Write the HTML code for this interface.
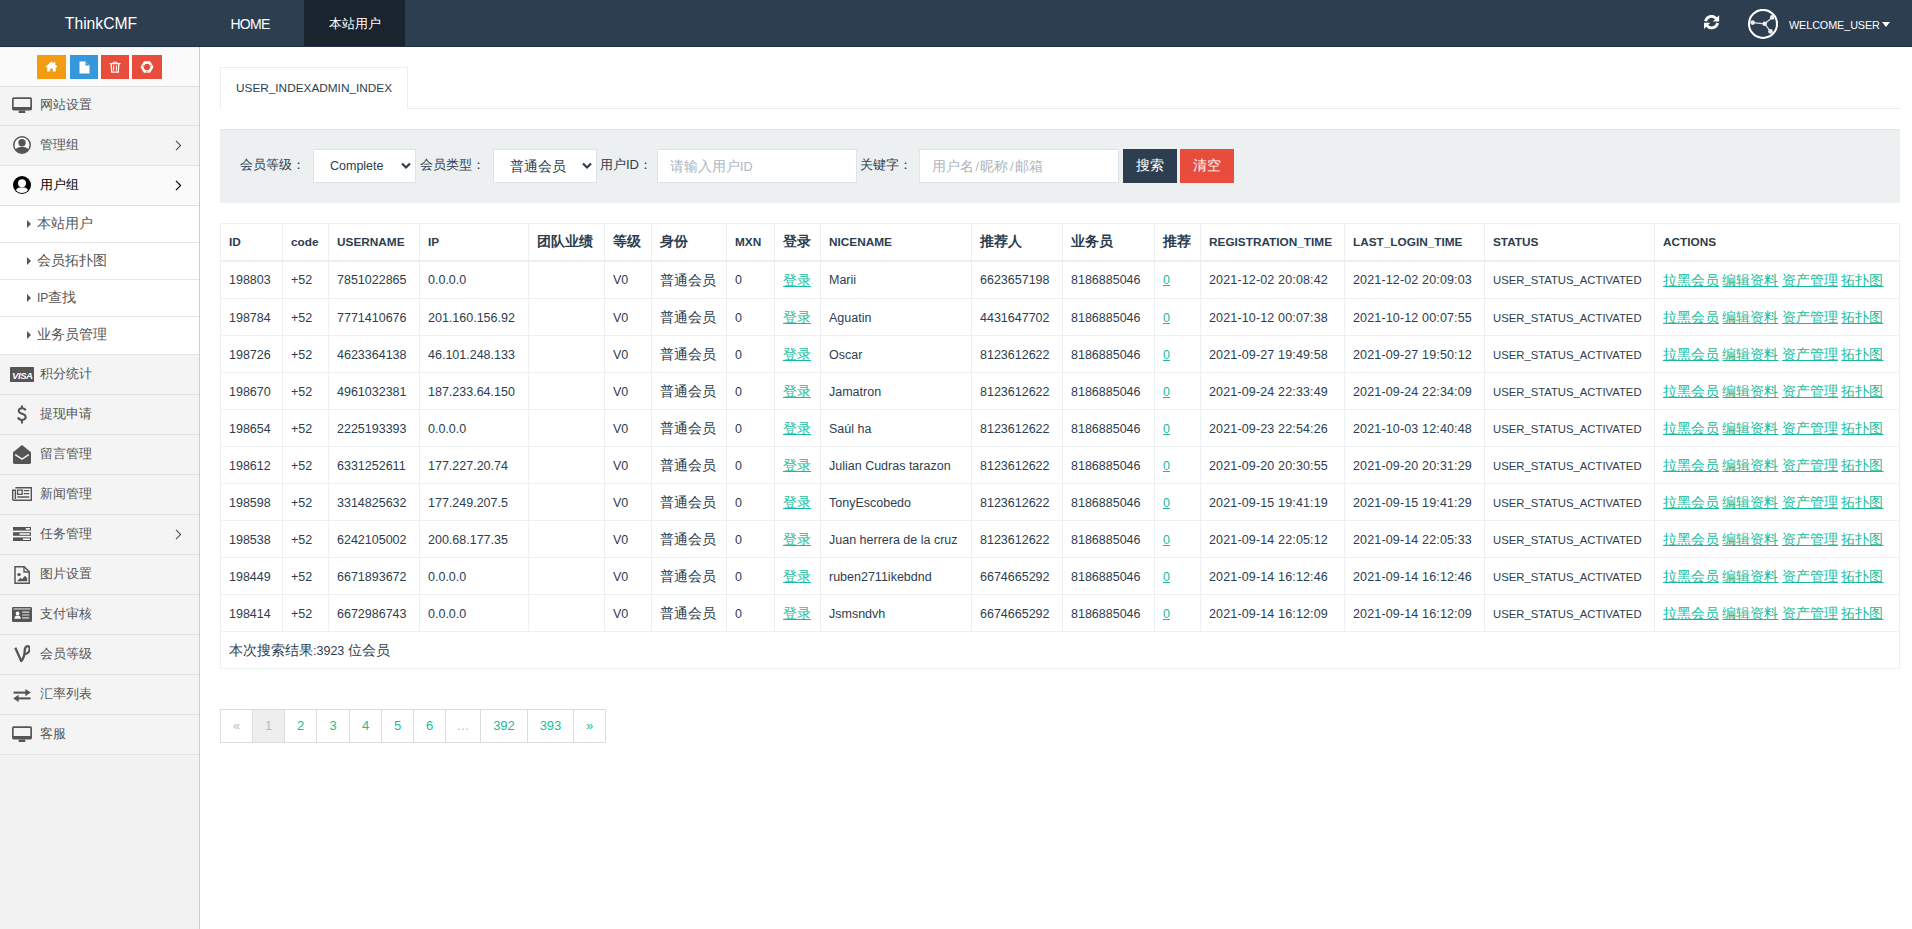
<!DOCTYPE html>
<html><head><meta charset="utf-8">
<style>
*{box-sizing:border-box;margin:0;padding:0}
html,body{width:1912px;height:929px;overflow:hidden;background:#fff;font-family:"Liberation Sans",sans-serif;font-size:12.5px;color:#2c3e50}
.c{font-size:14px}
a{color:#18bc9c;text-decoration:underline}
#nav{position:absolute;left:0;top:0;width:1912px;height:47px;background:#2c3e50;border-bottom:1px solid #203047}
#nav .brand{position:absolute;left:0;top:0;width:200px;height:46px;line-height:46px;text-align:center;color:#fff;font-size:15.7px}
#nav .item{position:absolute;top:0;height:46px;line-height:46px;color:#fff;font-size:13px;text-align:center}
#nav .item .c{font-size:13px}
#side{position:absolute;left:0;top:47px;width:200px;height:882px;background:#f2f2f2;border-right:1px solid #cdcdcd}
#side .top{position:absolute;left:0;top:1px;width:199px;height:39px;background:#fafafa;border-bottom:1px solid #dedede}
.sb{position:absolute;top:7px;height:24px}
.mi{position:absolute;left:0;width:199px;border-bottom:1px solid #e2e2e2;color:#555}
.mi .t{position:absolute;left:40px;top:0;font-size:13px;line-height:36px}
.mi svg{position:absolute}
.mi .chev{position:absolute;left:175px}
.sub{background:#fff;border-bottom:1px solid #e6e6e6}
.sub .t{left:37px;line-height:34px;font-size:14px}
.sub .tri{position:absolute;left:27px;top:14px;width:0;height:0;border-top:4px solid transparent;border-bottom:4px solid transparent;border-left:4px solid #555}
#main{position:absolute;left:200px;top:47px;width:1712px;height:882px;background:#fff}
#tab{position:absolute;left:220px;top:67px;width:188px;height:42px;border:1px solid #e9eef0;border-bottom:none;background:#fff}
#tab span{position:absolute;left:15px;top:13px;font-size:11.8px;line-height:14px;color:#2c3e50}
#tabline{position:absolute;left:407px;top:108px;width:1493px;height:1px;background:#e9eef0}
#well{position:absolute;left:220px;top:129px;width:1680px;height:74px;background:#ecf0f1;border-top:1px solid #e3e6e8}
.lbl{position:absolute;top:21px;font-size:13px;line-height:28px;color:#2c3e50}
.lbl .c{font-size:13px}
.sel,.inp{position:absolute;top:19px;height:34px;background:#fff;border:1px solid #dce4ec}
.sel>span{position:absolute;left:16px;top:0;line-height:32px}
.sel svg{position:absolute;top:12px}
.inp>span{position:absolute;left:12px;top:0;line-height:32px;color:#acb6c0}
.btn{position:absolute;top:19px;height:34px;color:#fff;text-align:center;line-height:33px}
#tb{position:absolute;left:220px;top:223px;border-collapse:collapse;table-layout:fixed;width:1680px}
#tb td,#tb th{border:1px solid #ecf0f1;padding:0 8px;height:37px;text-align:left;white-space:nowrap;overflow:hidden;vertical-align:middle;line-height:20px}
#tb th{font-weight:bold;height:37px;border-bottom:2px solid #ecf0f1}
#tb .u{font-size:11.8px}
#tb .u2{font-size:11.3px}
#tb tr.ft td{height:37px}
#tb tr.r1 td{height:38px}
#tb td{padding-top:1px}
.dt{letter-spacing:0.15px}
#pg{position:absolute;left:220px;top:709px;height:34px}
#pg div{position:absolute;top:0;height:34px;border:1px solid #ddd;line-height:32px;text-align:center;color:#18bc9c;font-size:13px}
</style></head><body>
<div id="nav">
  <div class="brand" style="left:1px;top:1px">ThinkCMF</div>
  <div class="item" style="left:209px;width:82px;font-size:14px;letter-spacing:-0.7px;top:0.5px">HOME</div>
  <div class="item" style="left:304px;width:101px;background:#1a242f"><span class="c" style="position:relative;top:1px">本站用户</span></div>
  <svg style="position:absolute;left:1704px;top:15px" width="16" height="15" viewBox="0 0 16 15">
    <path d="M1.6 6.3A6 6 0 0 1 12.2 3.6" fill="none" stroke="#fff" stroke-width="2.8"/>
    <path d="M8.8 6.4H15.1V0.2z" fill="#fff"/>
    <path d="M13.6 7.9A6 6 0 0 1 3 10.6" fill="none" stroke="#fff" stroke-width="2.8"/>
    <path d="M0 7.8H6.3L0 14z" fill="#fff"/>
  </svg>
  <svg style="position:absolute;left:1747px;top:9px" width="32" height="31" viewBox="0 0 32 31">
    <circle cx="16" cy="14.9" r="14" fill="none" stroke="#fff" stroke-width="2"/>
    <path d="M5.6 13.6L17.7 14.8L25.2 8.4M17.7 14.8L23.5 22.4" stroke="#dfe2e5" stroke-width="1.3" fill="none"/>
    <circle cx="5.6" cy="13.6" r="2.3" fill="#eceef0"/><circle cx="17.7" cy="14.8" r="2.3" fill="#eceef0"/>
    <circle cx="25.2" cy="8.4" r="2.3" fill="#eceef0"/><circle cx="23.5" cy="22.4" r="2.3" fill="#eceef0"/>
  </svg>
  <div style="position:absolute;left:1789px;top:18px;font-size:10.8px;line-height:14px;color:#fff;letter-spacing:-0.08px">WELCOME_USER</div>
  <div style="position:absolute;left:1882px;top:22px;width:0;height:0;border-left:4.5px solid transparent;border-right:4.5px solid transparent;border-top:5px solid #fff"></div>
</div>

<div id="side">
  <div class="top">
    <div class="sb" style="left:37px;width:29px;background:#f39c12">
      <svg style="position:absolute;left:8px;top:6px" width="13" height="11" viewBox="0 0 13 11"><path d="M6.5 0.5L0.5 5.8L1.3 6.6L2.2 5.8V10.5H5.2V7.5H7.8V10.5H10.8V5.8L11.7 6.6L12.5 5.8L10.3 3.8V1H8.9V2.6z" fill="#fff"/></svg>
    </div>
    <div class="sb" style="left:70px;width:28px;background:#3498db">
      <svg style="position:absolute;left:9px;top:6px" width="11" height="13" viewBox="0 0 11 13"><path d="M0.5 0.5H6.5L10.5 4.5V12.5H0.5z" fill="#fff"/><path d="M6.5 0.5V4.5H10.5" fill="#3498db"/></svg>
    </div>
    <div class="sb" style="left:101px;width:28px;background:#e74c3c">
      <svg style="position:absolute;left:8px;top:6px" width="12" height="12" viewBox="0 0 12 12"><path d="M0.6 2.6H11.4" stroke="#fff" stroke-width="1.3"/><path d="M4.2 2.4V1.2H7.8V2.4" stroke="#fff" stroke-width="1" fill="none"/><path d="M2.2 2.8L2.7 11.2H9.3L9.8 2.8" stroke="#fff" stroke-width="1.3" fill="none"/><path d="M4.6 4.4V9.6M7.4 4.4V9.6" stroke="#fff" stroke-width="1"/></svg>
    </div>
    <div class="sb" style="left:132px;width:30px;background:#e74c3c">
      <svg style="position:absolute;left:8px;top:5px" width="14" height="14" viewBox="0 0 14 14"><path d="M2 7L4.5 2.6H9.5L12 7L9.5 11.4H4.5z" fill="none" stroke="#fff" stroke-width="2.6" stroke-linejoin="round"/><path d="M7 3.6L10 9H4z" fill="#e74c3c"/><path d="M2.5 5.2L4.5 6.4M11.5 5.2L9.5 6.4M7 12.5V10.6" stroke="#e74c3c" stroke-width="0.9"/></svg>
    </div>
  </div>
  
</div>

<div id="tab"><span>USER_INDEXADMIN_INDEX</span></div>
<div id="tabline"></div>

<div id="well">
  <div class="lbl" style="left:20px"><span class="c">会员等级：</span></div>
  <div class="sel" style="left:93px;width:103px"><span>Complete</span><svg style="left:87px" width="10" height="8" viewBox="0 0 10 8"><path d="M1 1.5L5 5.5L9 1.5" stroke="#2c3e50" stroke-width="2.2" fill="none"/></svg></div>
  <div class="lbl" style="left:200px"><span class="c">会员类型：</span></div>
  <div class="sel" style="left:273px;width:104px"><span class="c" style="left:16px">普通会员</span><svg style="left:88px" width="10" height="8" viewBox="0 0 10 8"><path d="M1 1.5L5 5.5L9 1.5" stroke="#2c3e50" stroke-width="2.2" fill="none"/></svg></div>
  <div class="lbl" style="left:380px"><span class="c">用户</span>ID<span class="c">：</span></div>
  <div class="inp" style="left:437px;width:200px"><span><span class="c">请输入用户</span>ID</span></div>
  <div class="lbl" style="left:640px"><span class="c">关键字：</span></div>
  <div class="inp" style="left:699px;width:200px"><span><span class="c">用户名</span><span style="margin:0 1.5px">/</span><span class="c">昵称</span><span style="margin:0 1.5px">/</span><span class="c">邮箱</span></span></div>
  <div class="btn" style="left:903px;width:54px;background:#2c3e50"><span class="c">搜索</span></div>
  <div class="btn" style="left:960px;width:54px;background:#e74c3c"><span class="c">清空</span></div>
</div>

<table id="tb"><colgroup><col style="width:62px"><col style="width:46px"><col style="width:91px"><col style="width:109px"><col style="width:76px"><col style="width:47px"><col style="width:75px"><col style="width:48px"><col style="width:46px"><col style="width:151px"><col style="width:91px"><col style="width:92px"><col style="width:46px"><col style="width:144px"><col style="width:140px"><col style="width:170px"><col style="width:245px"></colgroup><tr class="hd"><th><span class="u">ID</span></th><th><span class="u">code</span></th><th><span class="u">USERNAME</span></th><th><span class="u">IP</span></th><th><span class="c">团队业绩</span></th><th><span class="c">等级</span></th><th><span class="c">身份</span></th><th><span class="u">MXN</span></th><th><span class="c">登录</span></th><th><span class="u">NICENAME</span></th><th><span class="c">推荐人</span></th><th><span class="c">业务员</span></th><th><span class="c">推荐</span></th><th><span class="u">REGISTRATION_TIME</span></th><th><span class="u">LAST_LOGIN_TIME</span></th><th><span class="u">STATUS</span></th><th><span class="u">ACTIONS</span></th></tr><tr class="r1"><td>198803</td><td>+52</td><td>7851022865</td><td>0.0.0.0</td><td></td><td>V0</td><td><span class="c">普通会员</span></td><td>0</td><td><a class="c">登录</a></td><td>Marii</td><td>6623657198</td><td>8186885046</td><td><a>0</a></td><td><span class="dt">2021-12-02 20:08:42</span></td><td><span class="dt">2021-12-02 20:09:03</span></td><td><span class="u2">USER_STATUS_ACTIVATED</span></td><td><a class="c">拉黑会员</a> <a class="c">编辑资料</a> <a class="c">资产管理</a> <a class="c">拓扑图</a></td></tr><tr><td>198784</td><td>+52</td><td>7771410676</td><td>201.160.156.92</td><td></td><td>V0</td><td><span class="c">普通会员</span></td><td>0</td><td><a class="c">登录</a></td><td>Aguatin</td><td>4431647702</td><td>8186885046</td><td><a>0</a></td><td><span class="dt">2021-10-12 00:07:38</span></td><td><span class="dt">2021-10-12 00:07:55</span></td><td><span class="u2">USER_STATUS_ACTIVATED</span></td><td><a class="c">拉黑会员</a> <a class="c">编辑资料</a> <a class="c">资产管理</a> <a class="c">拓扑图</a></td></tr><tr><td>198726</td><td>+52</td><td>4623364138</td><td>46.101.248.133</td><td></td><td>V0</td><td><span class="c">普通会员</span></td><td>0</td><td><a class="c">登录</a></td><td>Oscar</td><td>8123612622</td><td>8186885046</td><td><a>0</a></td><td><span class="dt">2021-09-27 19:49:58</span></td><td><span class="dt">2021-09-27 19:50:12</span></td><td><span class="u2">USER_STATUS_ACTIVATED</span></td><td><a class="c">拉黑会员</a> <a class="c">编辑资料</a> <a class="c">资产管理</a> <a class="c">拓扑图</a></td></tr><tr><td>198670</td><td>+52</td><td>4961032381</td><td>187.233.64.150</td><td></td><td>V0</td><td><span class="c">普通会员</span></td><td>0</td><td><a class="c">登录</a></td><td>Jamatron</td><td>8123612622</td><td>8186885046</td><td><a>0</a></td><td><span class="dt">2021-09-24 22:33:49</span></td><td><span class="dt">2021-09-24 22:34:09</span></td><td><span class="u2">USER_STATUS_ACTIVATED</span></td><td><a class="c">拉黑会员</a> <a class="c">编辑资料</a> <a class="c">资产管理</a> <a class="c">拓扑图</a></td></tr><tr><td>198654</td><td>+52</td><td>2225193393</td><td>0.0.0.0</td><td></td><td>V0</td><td><span class="c">普通会员</span></td><td>0</td><td><a class="c">登录</a></td><td>Saúl ha</td><td>8123612622</td><td>8186885046</td><td><a>0</a></td><td><span class="dt">2021-09-23 22:54:26</span></td><td><span class="dt">2021-10-03 12:40:48</span></td><td><span class="u2">USER_STATUS_ACTIVATED</span></td><td><a class="c">拉黑会员</a> <a class="c">编辑资料</a> <a class="c">资产管理</a> <a class="c">拓扑图</a></td></tr><tr><td>198612</td><td>+52</td><td>6331252611</td><td>177.227.20.74</td><td></td><td>V0</td><td><span class="c">普通会员</span></td><td>0</td><td><a class="c">登录</a></td><td>Julian Cudras tarazon</td><td>8123612622</td><td>8186885046</td><td><a>0</a></td><td><span class="dt">2021-09-20 20:30:55</span></td><td><span class="dt">2021-09-20 20:31:29</span></td><td><span class="u2">USER_STATUS_ACTIVATED</span></td><td><a class="c">拉黑会员</a> <a class="c">编辑资料</a> <a class="c">资产管理</a> <a class="c">拓扑图</a></td></tr><tr><td>198598</td><td>+52</td><td>3314825632</td><td>177.249.207.5</td><td></td><td>V0</td><td><span class="c">普通会员</span></td><td>0</td><td><a class="c">登录</a></td><td>TonyEscobedo</td><td>8123612622</td><td>8186885046</td><td><a>0</a></td><td><span class="dt">2021-09-15 19:41:19</span></td><td><span class="dt">2021-09-15 19:41:29</span></td><td><span class="u2">USER_STATUS_ACTIVATED</span></td><td><a class="c">拉黑会员</a> <a class="c">编辑资料</a> <a class="c">资产管理</a> <a class="c">拓扑图</a></td></tr><tr><td>198538</td><td>+52</td><td>6242105002</td><td>200.68.177.35</td><td></td><td>V0</td><td><span class="c">普通会员</span></td><td>0</td><td><a class="c">登录</a></td><td>Juan herrera de la cruz</td><td>8123612622</td><td>8186885046</td><td><a>0</a></td><td><span class="dt">2021-09-14 22:05:12</span></td><td><span class="dt">2021-09-14 22:05:33</span></td><td><span class="u2">USER_STATUS_ACTIVATED</span></td><td><a class="c">拉黑会员</a> <a class="c">编辑资料</a> <a class="c">资产管理</a> <a class="c">拓扑图</a></td></tr><tr><td>198449</td><td>+52</td><td>6671893672</td><td>0.0.0.0</td><td></td><td>V0</td><td><span class="c">普通会员</span></td><td>0</td><td><a class="c">登录</a></td><td>ruben2711ikebdnd</td><td>6674665292</td><td>8186885046</td><td><a>0</a></td><td><span class="dt">2021-09-14 16:12:46</span></td><td><span class="dt">2021-09-14 16:12:46</span></td><td><span class="u2">USER_STATUS_ACTIVATED</span></td><td><a class="c">拉黑会员</a> <a class="c">编辑资料</a> <a class="c">资产管理</a> <a class="c">拓扑图</a></td></tr><tr><td>198414</td><td>+52</td><td>6672986743</td><td>0.0.0.0</td><td></td><td>V0</td><td><span class="c">普通会员</span></td><td>0</td><td><a class="c">登录</a></td><td>Jsmsndvh</td><td>6674665292</td><td>8186885046</td><td><a>0</a></td><td><span class="dt">2021-09-14 16:12:09</span></td><td><span class="dt">2021-09-14 16:12:09</span></td><td><span class="u2">USER_STATUS_ACTIVATED</span></td><td><a class="c">拉黑会员</a> <a class="c">编辑资料</a> <a class="c">资产管理</a> <a class="c">拓扑图</a></td></tr><tr class="ft"><td colspan="17"><span class="c">本次搜索结果</span>:3923 <span class="c">位会员</span></td></tr></table>

<div id="pg">
  <div style="left:0;width:33px;color:#b4bcc2">«</div>
  <div style="left:32px;width:33px;background:#eee;color:#b4bcc2">1</div>
  <div style="left:64px;width:33px">2</div>
  <div style="left:96px;width:34px">3</div>
  <div style="left:129px;width:33px">4</div>
  <div style="left:161px;width:33px">5</div>
  <div style="left:193px;width:33px">6</div>
  <div style="left:225px;width:36px;color:#b4bcc2">…</div>
  <div style="left:260px;width:48px">392</div>
  <div style="left:307px;width:47px">393</div>
  <div style="left:353px;width:33px">»</div>
</div>
<div class="mi" style="top:87px;height:39px;background:#f4f4f4;color:#555"><svg style="position:absolute;left:12px;top:10px" width="20" height="16" viewBox="0 0 20 16"><path d="M1.6 0.3H18.4A1.6 1.6 0 0 1 20 1.9V11.8A1.6 1.6 0 0 1 18.4 13.4H1.6A1.6 1.6 0 0 1 0 11.8V1.9A1.6 1.6 0 0 1 1.6 0.3z" fill="#555"/><rect x="1.7" y="2" width="16.6" height="8" fill="#f4f4f4"/><path d="M7 13.4H13L13.5 16H6.5z" fill="#555"/></svg><span class="t" style="top:0px">网站设置</span></div><div class="mi" style="top:126px;height:40px;background:#f4f4f4;color:#555"><svg style="position:absolute;left:13px;top:10px" width="18" height="18" viewBox="0 0 18 18"><circle cx="9" cy="9" r="8.2" fill="#fff" stroke="#555" stroke-width="1.5"/><circle cx="9" cy="6.8" r="3.7" fill="#555"/><path d="M2.6 13.4C3.6 11.2 6 10.9 9 10.9S14.4 11.2 15.4 13.4A7.5 7.5 0 0 1 2.6 13.4z" fill="#555"/></svg><span class="t" style="top:1px">管理组</span><svg style="position:absolute;left:175px;top:14px" width="7" height="11" viewBox="0 0 7 11"><path d="M1 0.8L5.6 5.5L1 10.2" stroke="#555" stroke-width="1.15" fill="none"/></svg></div><div class="mi" style="top:166px;height:40px;background:#fafafa;color:#000"><svg style="position:absolute;left:13px;top:10px" width="18" height="18" viewBox="0 0 18 18"><circle cx="9" cy="9" r="9" fill="#000"/><circle cx="9" cy="7.2" r="4" fill="#fafafa"/><circle cx="9" cy="7.2" r="2.3" fill="#fafafa"/><path d="M2.9 14C4 11.8 6.2 11.2 9 11.2S14 11.8 15.1 14A7.6 7.6 0 0 1 2.9 14z" fill="#fafafa"/></svg><span class="t" style="top:1px">用户组</span><svg style="position:absolute;left:175px;top:14px" width="7" height="11" viewBox="0 0 7 11"><path d="M1 0.8L5.6 5.5L1 10.2" stroke="#000" stroke-width="1.15" fill="none"/></svg></div><div class="mi sub" style="top:206px;height:37px"><span class="tri"></span><span class="t">本站用户</span></div><div class="mi sub" style="top:243px;height:37px"><span class="tri"></span><span class="t">会员拓扑图</span></div><div class="mi sub" style="top:280px;height:37px"><span class="tri"></span><span class="t"><span style="font-size:12px">IP</span>查找</span></div><div class="mi sub" style="top:317px;height:38px"><span class="tri"></span><span class="t">业务员管理</span></div><div class="mi" style="top:355px;height:40px;background:#f4f4f4;color:#555"><svg style="position:absolute;left:10px;top:12px" width="24" height="15" viewBox="0 0 24 15"><rect x="0" y="0" width="24" height="15" rx="0.8" fill="#555"/><text x="12.3" y="11.6" text-anchor="middle" font-family="Liberation Sans" font-weight="bold" font-style="italic" font-size="9.6" fill="#fff" letter-spacing="-0.5">VISA</text></svg><span class="t" style="top:1px">积分统计</span></div><div class="mi" style="top:395px;height:40px;background:#f4f4f4;color:#555"><svg style="position:absolute;left:17px;top:10px" width="10" height="19" viewBox="0 0 10 19"><path d="M8.6 5.4C8.1 3.9 6.9 3.2 5 3.2 3 3.2 1.7 4.2 1.7 5.8c0 3.8 7 2.2 7 6.3 0 1.8-1.5 2.8-3.7 2.8-2.1 0-3.5-.9-4-2.5" stroke="#555" stroke-width="2" fill="none"/><path d="M5 0.5V3.3M5 14.8V18.5" stroke="#555" stroke-width="2"/></svg><span class="t" style="top:1px">提现申请</span></div><div class="mi" style="top:435px;height:40px;background:#f4f4f4;color:#555"><svg style="position:absolute;left:13px;top:10px" width="18" height="19" viewBox="0 0 18 19"><path d="M0 7.2L9 0L18 7.2V17.6A1.4 1.4 0 0 1 16.6 19H1.4A1.4 1.4 0 0 1 0 17.6z" fill="#555"/><path d="M2.2 9.6L9 14.2L15.8 9.6" stroke="#f4f4f4" stroke-width="1.5" fill="none"/></svg><span class="t" style="top:1px">留言管理</span></div><div class="mi" style="top:475px;height:40px;background:#f4f4f4;color:#555"><svg style="position:absolute;left:12px;top:12px" width="20" height="14" viewBox="0 0 20 14"><path d="M3.4 0.7H19.3V13.3H1.9A1.2 1.2 0 0 1 0.7 12.1V3.2H3.4V12" fill="none" stroke="#555" stroke-width="1.4"/><rect x="5.6" y="3.1" width="4.6" height="4.2" fill="none" stroke="#555" stroke-width="1.3"/><path d="M11.8 3.7H17.2M11.8 6.7H17.2M5.4 10H17.2" stroke="#555" stroke-width="1.3"/></svg><span class="t" style="top:1px">新闻管理</span></div><div class="mi" style="top:515px;height:40px;background:#f4f4f4;color:#555"><svg style="position:absolute;left:13px;top:12px" width="18" height="14" viewBox="0 0 18 14"><rect x="0" y="0" width="18" height="3.6" fill="#555"/><rect x="0" y="5.2" width="18" height="3.6" fill="#555"/><rect x="0" y="10.4" width="18" height="3.6" fill="#555"/><rect x="12.8" y="1" width="4" height="1.6" fill="#f4f4f4"/><rect x="6.5" y="6.2" width="10.3" height="1.6" fill="#f4f4f4"/><rect x="10" y="11.4" width="6.8" height="1.6" fill="#f4f4f4"/></svg><span class="t" style="top:1px">任务管理</span><svg style="position:absolute;left:175px;top:14px" width="7" height="11" viewBox="0 0 7 11"><path d="M1 0.8L5.6 5.5L1 10.2" stroke="#555" stroke-width="1.15" fill="none"/></svg></div><div class="mi" style="top:555px;height:40px;background:#f4f4f4;color:#555"><svg style="position:absolute;left:14px;top:11px" width="16" height="18" viewBox="0 0 16 18"><path d="M1 0.8H10.3L15.2 5.7V17.2H1z" fill="none" stroke="#555" stroke-width="1.5"/><path d="M10 0.8V6H15.2" fill="none" stroke="#555" stroke-width="1.3"/><circle cx="5" cy="8.6" r="1.7" fill="#555"/><path d="M3 15.2L6.4 11.8L8 13.3L11 9.8L13.2 12.3V15.2z" fill="#555"/></svg><span class="t" style="top:1px">图片设置</span></div><div class="mi" style="top:595px;height:40px;background:#f4f4f4;color:#555"><svg style="position:absolute;left:12px;top:12px" width="20" height="15" viewBox="0 0 20 15"><rect x="0" y="0" width="20" height="15" rx="1.2" fill="#555"/><rect x="1.6" y="1.4" width="16.8" height="1.1" fill="#ddd"/><circle cx="5.6" cy="6.4" r="1.9" fill="#fff"/><path d="M2.4 11.8C2.6 9.6 3.6 8.6 5.6 8.6S8.6 9.6 8.8 11.8z" fill="#fff"/><path d="M10.2 5.2H17.2M10.2 8H17.2M10.2 10.8H17.2" stroke="#ddd" stroke-width="1.2"/></svg><span class="t" style="top:1px">支付审核</span></div><div class="mi" style="top:635px;height:40px;background:#f4f4f4;color:#555"><svg style="position:absolute;left:14px;top:10px" width="16" height="17" viewBox="0 0 16 17"><path d="M1.3 2.8L7.2 16C9.6 13.4 10.6 10 10.6 6.8 10.6 3.2 11.8 1.2 13.6 1.2 15.2 1.2 15.9 2.6 15.6 4.6 15.2 6.8 13.2 8.8 10.6 9.4" stroke="#555" stroke-width="2.3" fill="none"/></svg><span class="t" style="top:1px">会员等级</span></div><div class="mi" style="top:675px;height:40px;background:#f4f4f4;color:#555"><svg style="position:absolute;left:13px;top:14px" width="18" height="13" viewBox="0 0 18 13"><path d="M0.5 3.6H13.5" stroke="#555" stroke-width="2.1"/><path d="M12.4 0L17.8 3.6L12.4 7.2z" fill="#555"/><path d="M4.5 9.4H17.5" stroke="#555" stroke-width="2.1"/><path d="M5.6 5.8L0.2 9.4L5.6 13z" fill="#555"/></svg><span class="t" style="top:1px">汇率列表</span></div><div class="mi" style="top:715px;height:40px;background:#f4f4f4;color:#555"><svg style="position:absolute;left:12px;top:11px" width="20" height="16" viewBox="0 0 20 16"><path d="M1.6 0.3H18.4A1.6 1.6 0 0 1 20 1.9V11.8A1.6 1.6 0 0 1 18.4 13.4H1.6A1.6 1.6 0 0 1 0 11.8V1.9A1.6 1.6 0 0 1 1.6 0.3z" fill="#555"/><rect x="1.7" y="2" width="16.6" height="8" fill="#f4f4f4"/><path d="M7 13.4H13L13.5 16H6.5z" fill="#555"/></svg><span class="t" style="top:1px">客服</span></div></body></html>
